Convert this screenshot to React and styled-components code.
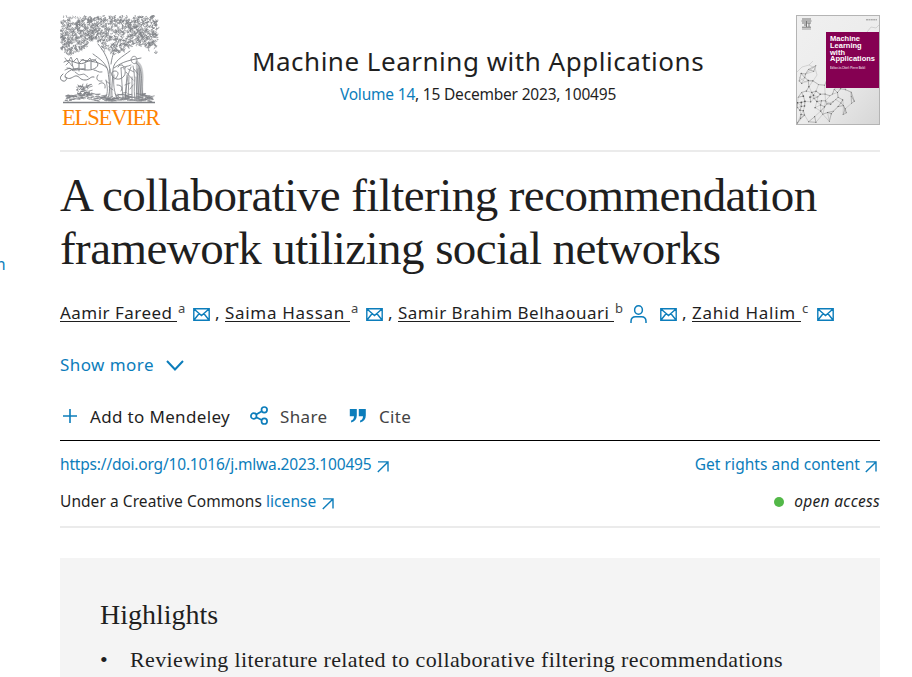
import React from 'react';
import styled, { createGlobalStyle } from 'styled-components';

const BLUE = '#0c7dbb';
const INK = '#1f1f1f';

const GlobalStyle = createGlobalStyle`
  * { box-sizing: border-box; }
  body { margin: 0; background: #fff; color: ${INK}; font-family: "Noto Sans", sans-serif; overflow: hidden; }
  svg { display: block; flex: none; }
`;

const Page = styled.div`
  display: grid;
  grid-template-columns: 60px 820px;
  height: 677px;
  overflow: hidden;
`;
const Rail = styled.aside`
  padding-top: 253px;
  overflow: hidden;
  font-size: 15.5px;
  line-height: 23px;
  color: ${BLUE};
`;
const RailLink = styled.span`
  display: block;
  margin-left: -4px;
`;
const Article = styled.main`
  display: flex;
  flex-direction: column;
  min-width: 0;
`;
const Header = styled.header`
  display: grid;
  grid-template-columns: 100px 1fr 84px;
  height: 152px;
  padding-top: 15px;
  border-bottom: 2px solid #ebebeb;
`;
const Brand = styled.div`
  display: flex;
  flex-direction: column;
`;
const BrandName = styled.span`
  margin: 2px 0 0 2px;
  font: 22.5px/24px "Liberation Serif", serif;
  letter-spacing: -1.15px;
  color: #ff8200;
  white-space: nowrap;
`;
const Journal = styled.div`
  padding-top: 29px;
  text-align: center;
  white-space: nowrap;
`;
const JournalName = styled.div`
  font-size: 26px;
  line-height: 35px;
  letter-spacing: 0.51px;
`;
const Issue = styled.div`
  margin-top: 4px;
  font-size: 15.5px;
  line-height: 23px;
  letter-spacing: -0.2px;
`;
const Link = styled.span`
  color: ${BLUE};
`;
const Cover = styled.div`
  display: grid;
  width: 84px;
  height: 110px;
  border: 1px solid #b4b4b4;
  background: linear-gradient(130deg, #f0f0f0, #ececec 55%, #d6d6d6);
  overflow: hidden;
  > * { grid-area: 1 / 1; }
`;
const CoverPanel = styled.div`
  justify-self: end;
  width: 53px;
  height: 56px;
  margin-top: 16px;
  padding: 4px 0 0 4px;
  background: #850052;
  color: #fff;
  font: bold 7.5px/6.8px "Liberation Sans", sans-serif;
  white-space: nowrap;
`;
const CoverLine = styled.div``;
const CoverEditor = styled.div`
  margin-top: 3px;
  font-size: 2.7px;
  line-height: 5px;
  opacity: 0.75;
`;
const Title = styled.h1`
  margin: 17px 0 0;
  font: 400 47px/53px "Liberation Serif", serif;
  letter-spacing: -0.56px;
  white-space: nowrap;
`;
const TitleLine = styled.span`
  display: block;
`;
const Authors = styled.div`
  display: flex;
  height: 24px;
  margin-top: 27px;
  font-size: 17px;
  line-height: 21px;
  white-space: pre;
`;
const Author = styled.span`
  width: ${(p) => p.$width}px;
  height: 20px;
  border-bottom: 1px solid ${INK};
  letter-spacing: ${(p) => p.$track}px;
`;
const Affiliation = styled.sup`
  width: 17px;
  padding-left: 1px;
  font-size: 13px;
  line-height: 12px;
  color: #444;
`;
const Contact = styled.span`
  display: flex;
  align-items: center;
  gap: 13px;
  height: 26px;
  margin: -1px 1px 0 -1px;
`;
const Comma = styled.span`
  width: 14px;
  padding-left: 4px;
`;
const ShowMore = styled.button`
  display: flex;
  align-items: center;
  gap: 12px;
  margin: 27px 0 0;
  padding: 0;
  border: 0;
  background: none;
  font: 17px/24px "Noto Sans", sans-serif;
  letter-spacing: 0.44px;
  color: ${BLUE};
`;
const Actions = styled.div`
  display: flex;
  height: 38px;
  margin-top: 26px;
  padding-top: 2px;
  border-bottom: 1px solid #000;
  font-size: 17px;
  line-height: 24px;
  letter-spacing: 0.34px;
`;
const Action = styled.span`
  display: flex;
  width: ${(p) => p.$width}px;
  color: ${(p) => p.$color || INK};
`;
const ActionIcon = styled.span`
  width: 30px;
  padding-top: 1px;
`;
const Meta = styled.section`
  display: flex;
  flex-direction: column;
  gap: 14px;
  height: 87px;
  padding-top: 12px;
  border-bottom: 2px solid #ebebeb;
  font-size: 15.5px;
  line-height: 23px;
`;
const MetaRow = styled.div`
  display: flex;
  justify-content: space-between;
  white-space: pre;
`;
const MetaItem = styled.span`
  display: flex;
  letter-spacing: ${(p) => p.$track || '0.06px'};
  padding-right: ${(p) => p.$end || 0}px;
`;
const OpenAccess = styled(MetaItem)`
  align-items: center;
  gap: 10px;
  font-style: italic;
  letter-spacing: 0.3px;
`;
const Dot = styled.span`
  width: 10px;
  height: 10px;
  border-radius: 50%;
  background: #53b848;
`;
const Highlights = styled.section`
  height: 150px;
  margin-top: 30px;
  padding: 40px 40px 0;
  background: #f4f4f4;
  font-family: "Liberation Serif", serif;
`;
const HighlightsTitle = styled.h2`
  margin: 0;
  font-size: 28px;
  font-weight: 400;
  line-height: 34px;
`;
const HighlightList = styled.ul`
  margin: 13px 0 0;
  padding: 0;
  list-style: none;
`;
const HighlightItem = styled.li`
  display: grid;
  grid-template-columns: 30px 1fr;
  font-size: 22px;
  line-height: 30px;
  letter-spacing: 0.37px;
  white-space: nowrap;
`;

function makeRandom(seed) {
  let s = seed;
  return () => {
    s = (s * 16807) % 2147483647;
    return s / 2147483647;
  };
}

const foliage = (() => {
  const r = makeRandom(418);
  const leaves = [];
  for (let i = 0; i < 1900; i += 1) {
    const x = 1 + r() * 96;
    const edge = 33 + 5 * Math.sin(x / 7) - (x > 28 && x < 42 ? 4 : 0);
    const y = 1 + r() * edge;
    if (y < 4 && Math.sin(x) > 0.3) continue;
    if (Math.sin(x * 0.75 + y * 0.3) * Math.cos(y * 0.8 - x * 0.2) > 0.55) continue;
    const a = r() * 6.28;
    const len = 1.1 + r() * 1.7;
    const dx = Math.cos(a) * len;
    const dy = Math.sin(a) * len;
    leaves.push(
      `M${x.toFixed(1)} ${y.toFixed(1)}q${(dx - dy * 0.6).toFixed(1)} ${(dy + dx * 0.6).toFixed(1)} ${dx.toFixed(1)} ${dy.toFixed(1)}`
    );
  }
  return leaves.join('');
})();

const ground = (() => {
  const r = makeRandom(77);
  let d = '';
  for (let i = 0; i < 150; i += 1) {
    const x = 5 + r() * 86;
    const y = 86 - r() * (3 + 6 * Math.abs(Math.sin(x / 15)));
    d += `M${x.toFixed(1)} ${y.toFixed(1)}l${(2 + r() * 3).toFixed(1)} ${(r() * 2 - 1).toFixed(1)}`;
  }
  for (let i = 0; i < 60; i += 1) {
    const x = 17 + r() * 13;
    const y = 70 + r() * 11;
    d += `M${x.toFixed(1)} ${y.toFixed(1)}l${(r() * 4 - 1).toFixed(1)} ${(-r() * 2).toFixed(1)}`;
  }
  return d;
})();

function Tree() {
  return (
    <svg width="100" height="89" viewBox="0 0 100 89" fill="none" stroke="#7d8085" strokeLinecap="round">
      <path d={foliage} strokeWidth=".65" />
      <path d="M48 83c3-8 1-18 0-27-2-8-8-12-15-17M52 82c-1-9 1-19 1-28 1-8 9-12 17-18M50 58c0-12-6-22-12-29M51 49c1-9 5-18 9-25M54 53c9-7 17-8 27-10M47 53c-6-6-16-7-26-8" strokeWidth=".9" />
      <path d="M50 54v27M54 60c-1 8 0 17 3 23M45 83c4-5 2-13 1-18M47 80l-8 5M55 79l8 6M46 66l4 3M49 72l4 3" strokeWidth=".8" />
      <path d="M4 47c6-5 13 4 20 1s10-5 13-1-2 8-9 8-12-3-17 0-8 6-4 8 7-3 10-2 3 4 8 4 5-4 9-3M3 59c-4 3-3 6 0 7s5-3 2-4M25 49v6M19 48v8M31 47v7M12 47c0 3 1 5 2 7M7 53c3 0 6 2 9 2s6-2 9-1" strokeWidth="1" />
      <path d="M5 43l3 4 3-5 2 5 4-4 2 5 4-4 3 3 4-4 2 4 4-3M6 50l3-3 3 4M5 55l5-2 3 3 5-3M15 57l4 3 5-1 4 3" strokeWidth=".8" />
      <path d="M55 64c5-5 3-8 0-8s-5 3-2 6 8 3 11-1-1-8 2-9M38 60c-3 4 0 7 4 6M39 69c4-3 7 0 6 4M57 70c5 0 6 3 4 6M42 57c-4 1-5-2-8-2M58 52c2-4 7-2 6 2" strokeWidth=".9" />
      <path d="M71 45c0-5 6-5 6 0s-5 5-6 0M71 50c-4 2-7 1-10 3M71 52c-5 10-4 21-6 33M73 51c3 11 0 22 2 34M76 48c7 3 5 19 7 36M66 57l7 8M67 60l-2 24M69 62l-1 22M72 62v23M77 54l2 30M79 53l2 30M76 62l1 23M68 54l6 3M61 53l2 32M74 54l4 5M65 70l5-2M70 74l3-4" strokeWidth=".8" />
      <path d="M76 46c7 1 8 13 7 23s2 12-1 17l-7 0c3-15 1-29 1-40z" fill="#7d8085" opacity=".45" strokeWidth=".4" />
      <path d={ground} strokeWidth=".8" />
      <path d="M3 87.500H95" strokeWidth="1.500" strokeLinecap="butt" />
    </svg>
  );
}

const net = (() => {
  const r = makeRandom(902);
  const points = [];
  for (let i = 0; i < 330; i += 1) {
    const x = r() * 64;
    const y = 48 + r() * 60;
    const reach = 1 - x / 72 - Math.abs(y - 84) / 60;
    const crowded = points.some((p) => Math.hypot(p.x - x, p.y - y) < 3.2);
    if (!crowded && r() < reach * 1.5) points.push({ x, y, size: 0.4 + r() * 0.6 * reach });
  }
  const lines = [];
  points.forEach((a, i) => {
    points
      .map((b, j) => ({ b, j, d: Math.hypot(a.x - b.x, a.y - b.y) }))
      .filter((e) => e.j !== i && e.d < 15)
      .sort((p, q) => p.d - q.d)
      .slice(0, 3)
      .forEach((e) => lines.push(`M${a.x.toFixed(1)} ${a.y.toFixed(1)}L${e.b.x.toFixed(1)} ${e.b.y.toFixed(1)}`));
  });
  return { points, d: lines.join('') };
})();

function CoverArt() {
  return (
    <svg width="82" height="108" viewBox="0 0 82 108" fill="none">
      <path d={net.d} stroke="#777" strokeWidth=".35" opacity=".75" />
      <path d="M0 56l5-5 7-2 6 3 2 7-4 6-8 1-6-5M12 49l4-4M70 16l4-5 5 1 4-4" stroke="#aaa" strokeWidth=".4" />
      {net.points.map((p, i) => (
        <circle key={i} cx={p.x} cy={p.y} r={p.size} fill="#555" />
      ))}
      <path d="M5 3h9M4.500 5h10M5 7h9M9.500 5v6M12 7v4M7 9h3M5 11.200h9" stroke="#777" strokeWidth="1" />
      <path d="M5 13h9" stroke="#888" strokeWidth=".8" />
      <path d="M69 3.800h11" stroke="#888" strokeWidth=".9" strokeDasharray="2 .4" />
    </svg>
  );
}

function Mail() {
  return (
    <svg width="17" height="13" viewBox="0 0 17 13" fill="none" stroke={BLUE} strokeWidth="1.4">
      <path d="M.8.8h15.400v11.400H.8zM1 1l7.500 6.500L16 1M1 12l5-6.300M16 12l-5-6.300" />
    </svg>
  );
}

function Person() {
  return (
    <svg width="17" height="18" viewBox="0 0 17 18" fill="none" stroke={BLUE} strokeWidth="1.5">
      <ellipse cx="8.500" cy="5" rx="3.900" ry="4.200" />
      <path d="M1 18v-1.500c0-3 2-4.800 4.500-4.800h6c2.500 0 4.500 1.800 4.500 4.800V18" />
    </svg>
  );
}

const ArrowBox = styled.span`
  padding: 7.5px 0 0 ${(p) => p.$gap || 6}px;
`;
function Arrow({ gap }) {
  return (
    <ArrowBox $gap={gap}>
      <svg width="12" height="12" viewBox="0 0 12 12" fill="none" stroke={BLUE} strokeWidth="1.4">
        <path d="M1 .9h10v9.600M11 .9L.8 11" />
      </svg>
    </ArrowBox>
  );
}

const authors = [
  { name: 'Aamir Fareed', mark: 'a', width: 117, track: 0.475 },
  { name: 'Saima Hassan', mark: 'a', width: 125, track: 0.7 },
  { name: 'Samir Brahim Belhaouari', mark: 'b', width: 216, track: 0.5, profile: true },
  { name: 'Zahid Halim', mark: 'c', width: 109, track: 0.74 },
];

export default function App() {
  return (
    <>
      <GlobalStyle />
      <Page>
        <Rail><RailLink>n</RailLink></Rail>
        <Article>
          <Header>
            <Brand>
              <Tree />
              <BrandName>ELSEVIER</BrandName>
            </Brand>
            <Journal>
              <JournalName>Machine Learning with Applications</JournalName>
              <Issue><Link>Volume 14</Link>, 15 December 2023, 100495</Issue>
            </Journal>
            <Cover>
              <CoverArt />
              <CoverPanel>
                <CoverLine>Machine</CoverLine>
                <CoverLine>Learning</CoverLine>
                <CoverLine>with</CoverLine>
                <CoverLine>Applications</CoverLine>
                <CoverEditor>Editor-in-Chief: Pierre Baldi</CoverEditor>
              </CoverPanel>
            </Cover>
          </Header>
          <Title>
            <TitleLine>A collaborative filtering recommendation</TitleLine>
            <TitleLine>framework utilizing social networks</TitleLine>
          </Title>
          <Authors>
            {authors.map((a, i) => (
              <React.Fragment key={a.name}>
                <Author $width={a.width} $track={a.track}>{a.name}</Author>
                <Affiliation>{a.mark}</Affiliation>
                <Contact>{a.profile && <Person />}<Mail /></Contact>
                {i < authors.length - 1 && <Comma>,</Comma>}
              </React.Fragment>
            ))}
          </Authors>
          <ShowMore>
            Show more
            <svg width="18" height="11" viewBox="0 0 18 11" fill="none" stroke={BLUE} strokeWidth="2">
              <path d="M1 1l8 8.500L17 1" />
            </svg>
          </ShowMore>
          <Actions>
            <Action $width={190}>
              <ActionIcon>
                <svg width="20" height="20" viewBox="0 0 20 20" stroke={BLUE} strokeWidth="1.600"><path d="M3 10h14M10 3v14" /></svg>
              </ActionIcon>
              Add to Mendeley
            </Action>
            <Action $width={99} $color="#444">
              <ActionIcon>
                <svg width="20" height="20" viewBox="0 0 20 20" fill="none" stroke={BLUE} strokeWidth="1.700">
                  <circle cx="3.700" cy="10" r="2.800" /><circle cx="14.300" cy="3.800" r="2.800" /><circle cx="14.300" cy="15.200" r="2.800" />
                  <path d="M6.200 8.600l5.600-3.300M6.200 11.300l5.600 2.700" />
                </svg>
              </ActionIcon>
              Share
            </Action>
            <Action $width={80} $color="#444">
              <ActionIcon>
                <svg width="20" height="20" viewBox="0 0 20 20" fill={BLUE}>
                  <path d="M.8 3h7v6.500c0 3.500-2 6-5.700 7v-2c2-.7 2.900-2.100 2.900-4.300H.8zM9.800 3h7v6.500c0 3.500-2 6-5.700 7v-2c2-.7 2.900-2.100 2.900-4.300h-4.200z" />
                </svg>
              </ActionIcon>
              Cite
            </Action>
          </Actions>
          <Meta>
            <MetaRow>
              <MetaItem $track="-0.18px"><Link>https://doi.org/10.1016/j.mlwa.2023.100495</Link><Arrow /></MetaItem>
              <MetaItem $end={3}><Link>Get rights and content</Link><Arrow gap={5} /></MetaItem>
            </MetaRow>
            <MetaRow>
              <MetaItem>{'Under a Creative Commons '}<Link>license</Link><Arrow /></MetaItem>
              <OpenAccess><Dot />open access</OpenAccess>
            </MetaRow>
          </Meta>
          <Highlights>
            <HighlightsTitle>Highlights</HighlightsTitle>
            <HighlightList>
              <HighlightItem><span>•</span>Reviewing literature related to collaborative filtering recommendations</HighlightItem>
            </HighlightList>
          </Highlights>
        </Article>
      </Page>
    </>
  );
}
